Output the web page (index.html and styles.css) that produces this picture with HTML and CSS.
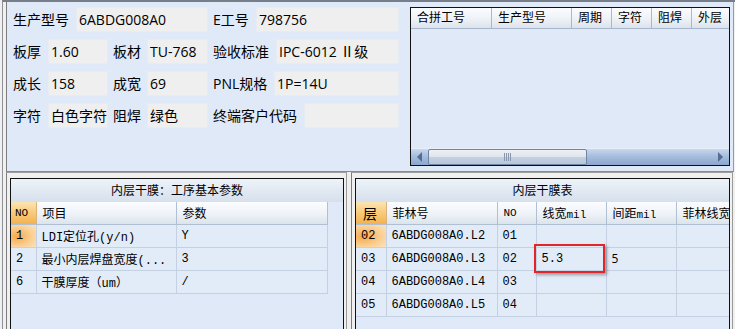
FILE: index.html
```html
<!DOCTYPE html>
<html lang="zh-CN">
<head>
    <meta charset="UTF-8">
    <title>内层干膜</title>
    <link rel="stylesheet" href="styles.css">
</head>
<body>
    <div class="app">
        <div class="top">
            <div class="fields">
                <div class="row">
                    <span class="lbl w63">生产型号</span><span class="box w132">6ABDG008A0</span>
                    <span class="lbl w48 gap">E工号</span><span class="box w143">798756</span>
                </div>
                <div class="row">
                    <span class="lbl w35">板厚</span><span class="box w60">1.60</span>
                    <span class="lbl w39 gap">板材</span><span class="box w61">TU-768</span>
                    <span class="lbl w68 gap">验收标准</span><span class="box w123">IPC-6012 Ⅱ级</span>
                </div>
                <div class="row">
                    <span class="lbl w35">成长</span><span class="box w60">158</span>
                    <span class="lbl w39 gap">成宽</span><span class="box w61">69</span>
                    <span class="lbl w66 gap">PNL规格</span><span class="box w125">1P=14U</span>
                </div>
                <div class="row">
                    <span class="lbl w35">字符</span><span class="box w60">白色字符</span>
                    <span class="lbl w39 gap">阻焊</span><span class="box w61">绿色</span>
                    <span class="lbl w96 gap">终端客户代码</span><span class="box w95"></span>
                </div>
            </div>

            <div class="grid">
                <div class="grid-head">
                    <span class="gh w81">合拼工号</span>
                    <span class="gh w80">生产型号</span>
                    <span class="gh w40">周期</span>
                    <span class="gh w40">字符</span>
                    <span class="gh w40">阻焊</span>
                    <span class="gh last">外层</span>
                </div>
                <div class="grid-body"></div>
                <div class="hscroll">
                    <span class="arrow left"></span>
                    <span class="thumb"><span class="grip"></span></span>
                    <span class="track"></span>
                    <span class="arrow right"></span>
                </div>
            </div>
        </div>

        <div class="bottom">
            <div class="panel panel-left">
                <div class="pbox">
                    <div class="ptitle">内层干膜：工序基本参数</div>
                    <table class="tbl tbl-params">
                        <colgroup>
                            <col class="c25"><col class="c140"><col class="c151">
                        </colgroup>
                        <tr>
                            <th class="no">NO</th><th>项目</th><th>参数</th>
                        </tr>
                        <tr>
                            <td class="sel">1</td><td>LDI定位孔(y/n)</td><td>Y</td>
                        </tr>
                        <tr>
                            <td>2</td><td>最小内层焊盘宽度(...</td><td>3</td>
                        </tr>
                        <tr>
                            <td>6</td><td>干膜厚度（um）</td><td>/</td>
                        </tr>
                    </table>
                </div>
            </div>

            <div class="panel panel-right">
                <div class="pbox">
                    <div class="ptitle">内层干膜表</div>
                    <table class="tbl tbl-film">
                        <colgroup>
                            <col class="c30"><col class="c111"><col class="c39"><col class="c70"><col class="c70"><col class="c80">
                        </colgroup>
                        <tr>
                            <th class="no big">层</th><th>菲林号</th><th class="small">NO</th>
                            <th>线宽<span class="unit">mil</span></th>
                            <th>间距<span class="unit">mil</span></th>
                            <th>菲林线宽</th>
                        </tr>
                        <tr>
                            <td class="sel">02</td><td>6ABDG008A0.L2</td><td>01</td><td></td><td></td><td></td>
                        </tr>
                        <tr>
                            <td>03</td><td>6ABDG008A0.L3</td><td>02</td><td>5.3</td><td class="sans">5</td><td></td>
                        </tr>
                        <tr>
                            <td>04</td><td>6ABDG008A0.L4</td><td>03</td><td></td><td></td><td></td>
                        </tr>
                        <tr>
                            <td>05</td><td>6ABDG008A0.L5</td><td>04</td><td></td><td></td><td></td>
                        </tr>
                    </table>
                    <div class="mark"></div>
                </div>
            </div>
        </div>
    </div>
</body>
</html>
```

FILE: styles.css
```css
:root {
    --panel-blue: #dfe9f8;
    --frame-gray: #f0f0f0;
    --line-dark: #7d7d7d;
    --cell-line: #c4d1e3;
    --ui-font: "Open Sans", "Noto Sans CJK SC", sans-serif;
    --grid-font: "Liberation Mono", "Noto Sans CJK SC", monospace;
}

* {
    margin: 0;
    padding: 0;
    box-sizing: border-box;
}

body {
    width: 735px;
    height: 329px;
    overflow: hidden;
    background-color: var(--frame-gray);
    font-family: var(--ui-font);
    font-size: 14px;
    color: #000;
}

.app {
    width: 733px;
    height: 329px;
    margin-left: 2px;
    border-left: 1px solid #8e9196;
    border-top: 2px solid #767e89;
    display: flex;
    flex-direction: column;
}

/* top block: order fields + merge grid */
.top {
    height: 170px;
    margin-left: 3px;
    margin-right: 1px;
    padding-top: 5px;
    display: flex;
    background-color: var(--panel-blue);
    border-left: 1px solid var(--line-dark);
    border-right: 1px solid #9a9a9a;
    border-bottom: 1px solid #8a8a8a;
}

.fields {
    width: 403px;
    flex: none;
    padding-left: 6px;
    display: flex;
    flex-direction: column;
    gap: 7px;
}

.row {
    display: flex;
    height: 25px;
}

.lbl {
    flex: none;
    line-height: 25px;
    white-space: nowrap;
}

.lbl.gap {
    padding-left: 5px;
}

.box {
    flex: none;
    height: 25px;
    padding-left: 2px;
    line-height: 23px;
    white-space: nowrap;
    overflow: hidden;
    background-color: #efefef;
    border: 1px solid #e7ecf2;
}

.w35 { width: 35px; }
.w39 { width: 39px; }
.w40 { width: 40px; }
.w48 { width: 48px; }
.w60 { width: 60px; }
.w61 { width: 61px; }
.w63 { width: 63px; }
.w66 { width: 66px; }
.w68 { width: 68px; }
.w80 { width: 80px; }
.w81 { width: 81px; }
.w95 { width: 95px; }
.w96 { width: 96px; }
.w123 { width: 123px; }
.w125 { width: 125px; }
.w132 { width: 132px; }
.w143 { width: 143px; }

.grid {
    width: 320px;
    height: 159px;
    flex: none;
    display: flex;
    flex-direction: column;
    background-color: var(--panel-blue);
    border: 1px solid #111;
}

.grid-head {
    height: 21px;
    display: flex;
    background: linear-gradient(#fbfcfe, #eef2f7 55%, #dbe3ec);
    border-bottom: 1px solid #a7b6ca;
}

.gh {
    flex: none;
    padding-left: 6px;
    font-size: 12px;
    line-height: 20px;
    border-right: 1px solid #a9b8cc;
}

.gh.last {
    flex: 1;
    border-right: none;
}

.grid-body {
    flex: 1;
}

.hscroll {
    height: 17px;
    display: flex;
    align-items: center;
    background: linear-gradient(#c9d9ee, #a9c0de 40%, #8ba7cd);
    border-top: 1px solid #e8eff8;
}

.arrow {
    width: 17px;
    height: 15px;
    flex: none;
    display: flex;
    align-items: center;
    justify-content: center;
}

.arrow::before {
    content: "";
    border-top: 5px solid transparent;
    border-bottom: 5px solid transparent;
}

.arrow.left::before {
    border-right: 5px solid #566c92;
}

.arrow.right::before {
    border-left: 5px solid #566c92;
}

.thumb {
    width: 159px;
    height: 16px;
    flex: none;
    display: flex;
    align-items: center;
    justify-content: center;
    background: linear-gradient(#edf0f4, #dfe5ec 50%, #c4d0df 52%, #b8c7da);
    border: 1px solid #7085a6;
    border-radius: 2px;
}

.grip {
    width: 7px;
    height: 8px;
    background: repeating-linear-gradient(to right, #8797ae 0 1px, transparent 1px 2px);
}

.track {
    flex: 1;
}

/* bottom panels */
.bottom {
    flex: 1;
    display: flex;
    min-height: 0;
}

.panel {
    padding: 5px 2px 0 3px;
    border-top: 1px solid #a0a0a0;
    border-left: 1px solid var(--line-dark);
    border-right: 1px solid #9a9a9a;
    display: flex;
}

.panel-left {
    width: 341px;
    margin-left: 3px;
}

.panel-right {
    width: 382px;
    margin-left: 4px;
}

.pbox {
    flex: 1;
    position: relative;
    overflow: hidden;
    background-color: var(--panel-blue);
    border: 1px solid #111;
    border-bottom: none;
}

.ptitle {
    height: 23px;
    line-height: 23px;
    text-align: center;
    font-size: 12px;
    background: linear-gradient(#eef3f9, #dfe7f1 60%, #d6e0ec);
}

.tbl {
    border-collapse: collapse;
    table-layout: fixed;
    font-family: var(--grid-font);
    font-size: 12px;
}

.tbl-params {
    width: 316px;
}

.tbl-film {
    width: 400px;
}

.c25 { width: 25px; }
.c30 { width: 30px; }
.c39 { width: 39px; }
.c70 { width: 70px; }
.c80 { width: 80px; }
.c111 { width: 111px; }
.c140 { width: 140px; }
.c151 { width: 151px; }

.tbl th {
    height: 22px;
    padding-left: 6px;
    text-align: left;
    font-weight: normal;
    font-family: var(--ui-font);
    font-size: 12px;
    white-space: nowrap;
    overflow: hidden;
    background: linear-gradient(#fbfcfe, #eef2f7 55%, #dbe3ec);
    border-right: 1px solid #b0bfd2;
    border-bottom: 1px solid #b0bfd2;
}

.tbl th.no {
    padding-left: 4px;
    font-family: var(--grid-font);
    font-size: 11px;
    background: linear-gradient(#fce4b4, #f8cc7e 45%, #f3b24f);
    border-right-color: #d8b27a;
}

.tbl th.no.big {
    padding-left: 7px;
    font-family: var(--ui-font);
    font-size: 14px;
}

.tbl th.small {
    font-family: var(--grid-font);
    font-size: 11px;
}

.unit {
    font-family: var(--grid-font);
    font-size: 11px;
}

.tbl td {
    height: 23px;
    padding-left: 5px;
    white-space: nowrap;
    overflow: hidden;
    background-color: #e2ecf9;
    border-right: 1px solid var(--cell-line);
    border-bottom: 1px solid var(--cell-line);
}

.tbl td.sel {
    background: radial-gradient(ellipse at 25% 55%, #f5a84c, #f9cf93 55%, #fce4c4);
}

.tbl td.sans {
    font-family: var(--ui-font);
}

/* annotation drawn over the table */
.mark {
    position: absolute;
    left: 178px;
    top: 65px;
    width: 71px;
    height: 29px;
    border: 2px solid #e0262a;
    box-shadow: 2px 2px 3px rgba(0, 0, 0, 0.35);
}
```
